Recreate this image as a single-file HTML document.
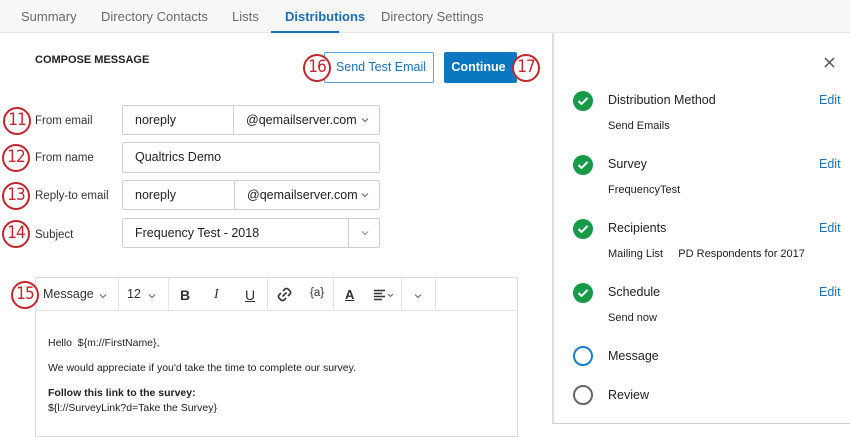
<!DOCTYPE html>
<html><head><meta charset="utf-8"><style>
*{box-sizing:border-box;margin:0;padding:0}
body{width:850px;height:425px;overflow:hidden;background:#fff;font-family:"Liberation Sans",sans-serif;color:#222;position:relative}
.a{position:absolute}
.tabs{left:0;top:0;width:850px;height:33px;background:#f7f7f7;border-bottom:1px solid #e6e6e6}
.tab{top:9px;font-size:13px;color:#6b6b6b}
.num{position:absolute;width:28px;height:28px;border:2.5px solid #c4262e;border-radius:50%;background:#fff;color:#c4262e;font-family:"DejaVu Sans Condensed","Liberation Sans Narrow",sans-serif;font-size:17px;line-height:23px;text-align:center;letter-spacing:-1px}
.lbl{font-size:11.5px;color:#333}
.box{position:absolute;border:1px solid #cfcfcf;border-radius:2px;background:#fff;font-size:12.5px;color:#222;padding-left:12px;line-height:28px}
.chev{position:absolute}
.chk{position:absolute;left:573px;width:20px;height:20px;border-radius:50%;background:#17994a}
.chk svg{position:absolute;left:4px;top:5px}
.t{position:absolute;left:608px;font-size:12.5px;color:#222}
.s{position:absolute;left:608px;font-size:11px;color:#222}
.e{position:absolute;left:819px;font-size:12.5px;color:#1a73b8}
.tb{position:absolute;top:287px;font-size:12.5px;color:#333}
.sep{position:absolute;top:278px;width:1px;height:32px;background:#e4e4e4}
</style></head><body>
<div class="a tabs"></div>
<div class="a tab" style="left:21px">Summary</div>
<div class="a tab" style="left:101px">Directory Contacts</div>
<div class="a tab" style="left:232px">Lists</div>
<div class="a tab" style="left:285px;color:#1a6fb5;font-weight:bold">Distributions</div>
<div class="a" style="left:271px;top:31px;width:68px;height:2px;background:#1a73b8"></div>
<div class="a tab" style="left:381px">Directory Settings</div>

<div class="a" style="left:35px;top:54px;font-size:11px;font-weight:bold;color:#222">COMPOSE MESSAGE</div>
<div class="a" style="left:324px;top:52px;width:110px;height:31px;border:1px solid #5ca3db;border-radius:2px;color:#1a73b8;font-size:12.5px;text-align:center;line-height:29px;padding-left:4px">Send Test Email</div>
<div class="a" style="left:444px;top:52px;width:73px;height:31px;background:#0b77c0;border-radius:2px;color:#fff;font-size:12.5px;font-weight:bold;text-align:center;line-height:31px;padding-right:4px">Continue</div>
<div class="num" style="left:303px;top:54px">16</div>
<div class="num" style="left:512px;top:54px">17</div>

<div class="num" style="left:3px;top:107px">11</div>
<div class="a lbl" style="left:35px;top:115px">From email</div>
<div class="box" style="left:122px;top:105px;width:112px;height:30px">noreply</div>
<div class="box" style="left:233px;top:105px;width:147px;height:30px">@qemailserver.com</div>
<svg class="chev" style="left:361px;top:117px" width="8" height="6"><path d="M1 1.5 L4 4.5 L7 1.5" stroke="#666" fill="none"/></svg>

<div class="num" style="left:2px;top:144px">12</div>
<div class="a lbl" style="left:35px;top:152px">From name</div>
<div class="box" style="left:122px;top:142px;width:258px;height:31px">Qualtrics Demo</div>

<div class="num" style="left:2px;top:182px">13</div>
<div class="a lbl" style="left:35px;top:190px">Reply-to email</div>
<div class="box" style="left:122px;top:180px;width:113px;height:30px">noreply</div>
<div class="box" style="left:234px;top:180px;width:146px;height:30px">@qemailserver.com</div>
<svg class="chev" style="left:361px;top:192px" width="8" height="6"><path d="M1 1.5 L4 4.5 L7 1.5" stroke="#666" fill="none"/></svg>

<div class="num" style="left:2px;top:220px">14</div>
<div class="a lbl" style="left:35px;top:229px">Subject</div>
<div class="box" style="left:122px;top:218px;width:258px;height:30px">Frequency Test - 2018</div>
<div class="a" style="left:348px;top:219px;width:1px;height:28px;background:#cfcfcf"></div>
<svg class="chev" style="left:361px;top:230px" width="8" height="6"><path d="M1 1.5 L4 4.5 L7 1.5" stroke="#888" fill="none"/></svg>

<div class="a" style="left:35px;top:277px;width:483px;height:160px;border:1px solid #dcdcdc"></div>
<div class="a" style="left:35px;top:310px;width:483px;height:1px;background:#e4e4e4"></div>
<div class="num" style="left:11px;top:281px">15</div>
<div class="tb" style="left:43px">Message</div>
<svg class="chev" style="left:99px;top:293px" width="8" height="6"><path d="M1 1.5 L4 4.5 L7 1.5" stroke="#666" fill="none"/></svg>
<div class="sep" style="left:118px"></div>
<div class="tb" style="left:127px">12</div>
<svg class="chev" style="left:148px;top:293px" width="8" height="6"><path d="M1 1.5 L4 4.5 L7 1.5" stroke="#666" fill="none"/></svg>
<div class="sep" style="left:168px"></div>
<div class="tb" style="left:180px;font-weight:bold;font-size:14px">B</div>
<div class="tb" style="left:214px;font-style:italic;font-family:'Liberation Serif',serif;font-size:14px">I</div>
<div class="tb" style="left:245px;text-decoration:underline;font-size:14px">U</div>
<div class="sep" style="left:267px"></div>
<svg class="a" style="left:277px;top:287px" width="15" height="15"><g stroke="#333" stroke-width="1.6" fill="none"><path d="M6 4 L8 2 Q9.5 0.8 11 2 L13 4 Q14.2 5.5 13 7 L11 9"/><path d="M9 11 L7 13 Q5.5 14.2 4 13 L2 11 Q0.8 9.5 2 8 L4 6"/><path d="M5.5 9.5 L9.5 5.5"/></g></svg>
<div class="tb" style="left:310px;font-size:11.5px">{a}</div>
<div class="sep" style="left:333px"></div>
<div class="tb" style="left:345px;font-weight:bold;text-decoration:underline;font-size:13px">A</div>
<svg class="a" style="left:374px;top:289px" width="22" height="12"><g stroke="#333" stroke-width="1.4"><path d="M0 1.5H11M0 4.5H8M0 7.5H11M0 10.5H8"/></g><path d="M14 5 L16.5 7.5 L19 5" stroke="#666" fill="none"/></svg>
<div class="sep" style="left:401px"></div>
<svg class="chev" style="left:414px;top:293px" width="8" height="6"><path d="M1 1.5 L4 4.5 L7 1.5" stroke="#666" fill="none"/></svg>
<div class="sep" style="left:435px"></div>
<div class="a" style="left:48px;top:337px;font-size:10.5px">Hello &nbsp;${m://FirstName},</div>
<div class="a" style="left:48px;top:362px;font-size:10.5px">We would appreciate if you'd take the time to complete our survey.</div>
<div class="a" style="left:48px;top:387px;font-size:10.5px;font-weight:bold">Follow this link to the survey:</div>
<div class="a" style="left:48px;top:402px;font-size:10.5px">${l://SurveyLink?d=Take the Survey}</div>

<div class="a" style="left:552px;top:33px;width:298px;height:391px;border-left:2px solid #dedede;border-bottom:1px solid #cfcfcf;background:#fff"></div>
<svg class="a" style="left:824px;top:57px" width="11" height="11"><path d="M1 1L10 10M10 1L1 10" stroke="#555" stroke-width="1.5"/></svg>

<div class="chk" style="top:91px"><svg width="12" height="10"><path d="M1.5 5 L4.5 8 L10.5 2" stroke="#fff" stroke-width="2" fill="none"/></svg></div>
<div class="t" style="top:93px">Distribution Method</div><div class="e" style="top:93px">Edit</div>
<div class="s" style="top:120px">Send Emails</div>
<div class="chk" style="top:155px"><svg width="12" height="10"><path d="M1.5 5 L4.5 8 L10.5 2" stroke="#fff" stroke-width="2" fill="none"/></svg></div>
<div class="t" style="top:157px">Survey</div><div class="e" style="top:157px">Edit</div>
<div class="s" style="top:184px">FrequencyTest</div>
<div class="chk" style="top:219px"><svg width="12" height="10"><path d="M1.5 5 L4.5 8 L10.5 2" stroke="#fff" stroke-width="2" fill="none"/></svg></div>
<div class="t" style="top:221px">Recipients</div><div class="e" style="top:221px">Edit</div>
<div class="s" style="top:248px">Mailing List &nbsp;&nbsp;&nbsp;&nbsp;PD Respondents for 2017</div>
<div class="chk" style="top:283px"><svg width="12" height="10"><path d="M1.5 5 L4.5 8 L10.5 2" stroke="#fff" stroke-width="2" fill="none"/></svg></div>
<div class="t" style="top:285px">Schedule</div><div class="e" style="top:285px">Edit</div>
<div class="s" style="top:312px">Send now</div>
<div class="a" style="left:573px;top:346px;width:20px;height:20px;border-radius:50%;border:2px solid #1a7fc8"></div>
<div class="t" style="top:349px">Message</div>
<div class="a" style="left:573px;top:385px;width:20px;height:20px;border-radius:50%;border:2px solid #666"></div>
<div class="t" style="top:388px">Review</div>
</body></html>
